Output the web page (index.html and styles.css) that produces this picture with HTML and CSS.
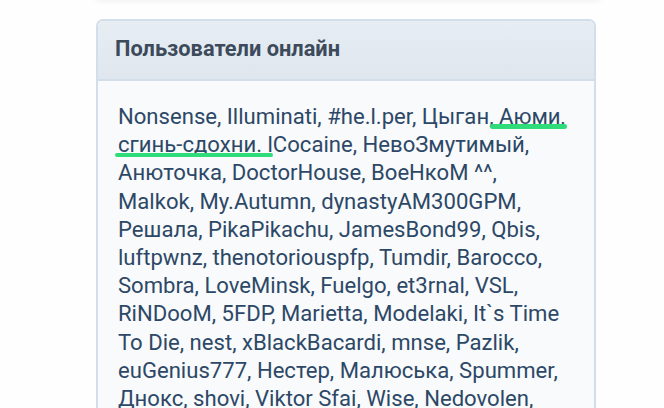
FILE: index.html
```html
<!DOCTYPE html>
<html lang="ru">
<head>
<meta charset="utf-8">
<link rel="stylesheet" href="styles.css">
</head>
<body>
<div class="page">
  <div class="prev-card"></div>
  <section class="block">
    <header class="block-header">Пользователи онлайн</header>
    <div class="block-body">
      <p class="users">Nonsense, Illuminati, #he.l.per, Цыган<span class="mark mark-a">, Аюми,</span><br>
<span class="mark mark-b">сгинь-сдохни. </span>lCocaine, НевоЗмутимый,<br>
Анюточка, DoctorHouse, ВоеНкоМ ^^,<br>
Malkok, My.Autumn, dynastyAM300GPM,<br>
Решала, PikaPikachu, JamesBond99, Qbis,<br>
luftpwnz, thenotoriouspfp, Tumdir, Barocco,<br>
Sombra, LoveMinsk, Fuelgo, et3rnal, VSL,<br>
RiNDooM, 5FDP, Marietta, Modelaki, It`s Time<br>
To Die, nest, xBlackBacardi, mnse, Pazlik,<br>
euGenius777, Нестер, Малюська, Spummer,<br>
Днокс, shovi, Viktor Sfai, Wise, Nedovolen,<br>
Bishop, Kusaka, Demon</p>
    </div>
  </section>
</div>
</body>
</html>
```
FILE: styles.css
```css
html, body {
  margin: 0;
  padding: 0;
  background: #fefefe;
  height: 408px;
  overflow: hidden;
}
.page {
  width: 500px;
  margin: 0 0 0 96px;
  font-family: Roboto, "Noto Sans", sans-serif;
}
.prev-card {
  height: 2px;
  margin-top: -2px;
  background: #fff;
  box-shadow: 0 1px 4px rgba(40, 60, 90, 0.12);
  margin-right: -4px;
}
.block {
  margin-top: 19px;
  border: 2px solid #d2deea;
  border-radius: 7px;
  overflow: hidden;
  background: #f8fafc;
}
.block-header {
  height: 60px;
  box-sizing: border-box;
  padding: 15px 0 0 17px;
  font-size: 21.8px;
  font-weight: bold;
  color: #3c4a5b;
  background: linear-gradient(#e7edf3, #dfe6ee);
  border-bottom: 2px solid #d2deea;
}
.block-body {
  padding: 21px 20px 0 20px;
}
.users {
  margin: 0;
  font-size: 22.1px;
  line-height: 28.2px;
  color: #2d4866;
  white-space: nowrap;
}
.mark {
  position: relative;
}
.mark::after {
  content: "";
  position: absolute;
  left: 0;
  right: 0;
  bottom: 0;
  height: 4.5px;
  border-radius: 3px;
  background: #2fdc7a;
}
.mark-a::after {
  left: 1px;
  right: -2px;
  bottom: 0.5px;
}
.mark-b::after {
  left: -3px;
  right: -6px;
  bottom: 0px;
}
```
